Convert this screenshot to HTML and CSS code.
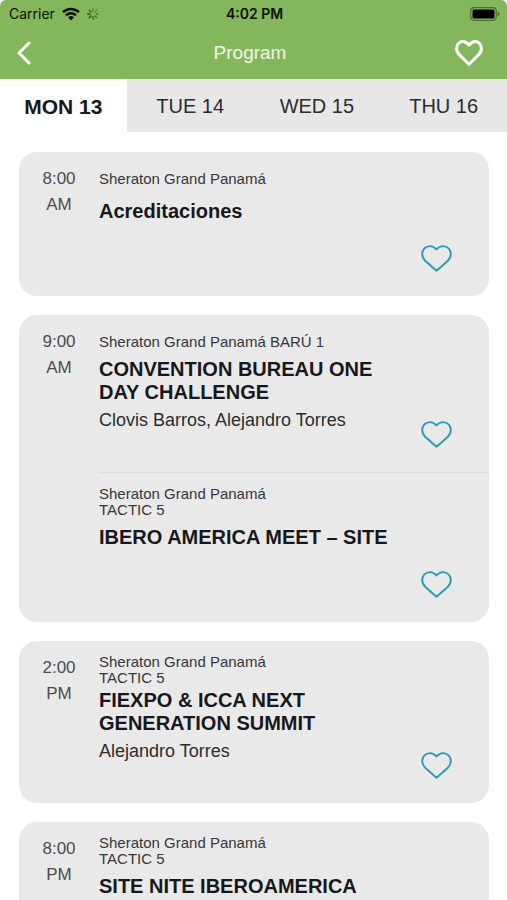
FILE: index.html
```
<!DOCTYPE html>
<html lang="en">
<head>
  <meta charset="UTF-8" />
  <meta name="viewport" content="width=device-width, initial-scale=1.0"/>
  <title>Program</title>
  <link rel="stylesheet" href="styles.css">
</head>
<body>

<!-- Shared heart icon -->
<svg class="sprite" aria-hidden="true">
  <symbol id="heart" viewBox="0 0 32 28">
    <path d="M16 4.600C13.800 2.200 11.400 1.200 9.200 1.200 4.600 1.200 1.200 4.800 1.200 9.400c0 3 1.300 5.200 3.300 7.200L16 26.800l11.500-10.200c2-2 3.300-4.200 3.300-7.200 0-4.600-3.400-8.200-8-8.200-2.200 0-4.600 1-6.800 3.400z"/>
  </symbol>
</svg>

<div class="app">

  <!-- Header -->
  <header class="header">
    <div class="status">
      <div class="status-left">
        <span>Carrier</span>
        <svg class="wifi" viewBox="0 0 18 14" aria-hidden="true">
          <path d="M1 5.200a11.500 11.500 0 0 1 16 0M4 8.300a7.200 7.200 0 0 1 10 0" fill="none" stroke="#0b1006" stroke-width="2.500"/>
          <path d="M6 10.300a4.400 4.400 0 0 1 6 0L9 13.500z" fill="#0b1006"/>
        </svg>
        <svg class="spinner" viewBox="0 0 12 12" aria-hidden="true">
          <g stroke="#2b4417" stroke-width="1.400" stroke-linecap="round">
            <path d="M6 .8v2.400" opacity=".5"/>
            <path d="M9.700 2.300L8 4" opacity=".4"/>
            <path d="M11.200 6H8.800" opacity=".5"/>
            <path d="M9.700 9.700L8 8" opacity=".6"/>
            <path d="M6 11.200V8.800" opacity=".75"/>
            <path d="M2.300 9.700L4 8" opacity=".9"/>
            <path d="M.8 6h2.400"/>
            <path d="M2.300 2.300L4 4" opacity=".8"/>
          </g>
        </svg>
      </div>
      <span class="clock">4:02 PM</span>
      <div class="status-right">
        <svg class="battery" viewBox="0 0 30 14" aria-hidden="true">
          <rect x=".7" y=".7" width="25.600" height="12.600" rx="3.500" fill="none" stroke="#4c7030" stroke-width="1.200"/>
          <rect x="2.500" y="2.500" width="22" height="9" rx="1.500" fill="#000"/>
          <path d="M27.600 4.800c1.400.6 2 1.300 2 2.200s-.6 1.600-2 2.200z" fill="#4c7030"/>
        </svg>
      </div>
    </div>
    <div class="navbar">
      <button class="nav-btn" aria-label="Back">
        <svg class="chevron" viewBox="0 0 14 24"><path d="M12 2L2 12l10 10"/></svg>
      </button>
      <h1 class="nav-title">Program</h1>
      <button class="nav-btn nav-btn-right" aria-label="Favorites">
        <svg class="nav-heart" viewBox="0 0 28 26"><path d="M14 5C11.800 2.500 9.700 1.600 7.900 1.600 4.400 1.600 1.600 4.500 1.600 8.400c0 2.700 1.100 4.700 2.900 6.500l9.500 9.300 9.500-9.300c1.800-1.800 2.900-3.800 2.900-6.500 0-3.900-2.800-6.800-6.300-6.800-1.800 0-3.900.9-6.100 3.400z"/></svg>
      </button>
    </div>
  </header>

  <!-- Days -->
  <nav class="days">
    <button class="day active">MON 13</button>
    <button class="day">TUE 14</button>
    <button class="day">WED 15</button>
    <button class="day">THU 16</button>
  </nav>

  <!-- Schedule -->
  <main class="schedule">

    <section class="card">
      <div class="time">8:00<br>AM</div>
      <div class="sessions">
        <article class="session">
          <div class="info">
            <p class="venue">Sheraton Grand Panamá</p>
            <h2 class="title">Acreditaciones</h2>
            <p class="speaker"></p>
          </div>
          <button class="fav" aria-label="Add to favorites"><svg><use href="#heart"/></svg></button>
        </article>
      </div>
    </section>

    <section class="card">
      <div class="time">9:00<br>AM</div>
      <div class="sessions">
        <article class="session">
          <div class="info">
            <p class="venue">Sheraton Grand Panamá BARÚ 1</p>
            <h2 class="title">CONVENTION BUREAU ONE DAY CHALLENGE</h2>
            <p class="speaker">Clovis Barros, Alejandro Torres</p>
          </div>
          <button class="fav" aria-label="Add to favorites"><svg><use href="#heart"/></svg></button>
        </article>
        <article class="session">
          <div class="info">
            <p class="venue">Sheraton Grand Panamá<br>TACTIC 5</p>
            <h2 class="title">IBERO AMERICA MEET – SITE</h2>
            <p class="speaker"></p>
          </div>
          <button class="fav" aria-label="Add to favorites"><svg><use href="#heart"/></svg></button>
        </article>
      </div>
    </section>

    <section class="card">
      <div class="time">2:00<br>PM</div>
      <div class="sessions">
        <article class="session">
          <div class="info">
            <p class="venue">Sheraton Grand Panamá<br>TACTIC 5</p>
            <h2 class="title">FIEXPO &amp; ICCA NEXT GENERATION SUMMIT</h2>
            <p class="speaker">Alejandro Torres</p>
          </div>
          <button class="fav" aria-label="Add to favorites"><svg><use href="#heart"/></svg></button>
        </article>
      </div>
    </section>

    <section class="card">
      <div class="time">8:00<br>PM</div>
      <div class="sessions">
        <article class="session">
          <div class="info">
            <p class="venue">Sheraton Grand Panamá<br>TACTIC 5</p>
            <h2 class="title">SITE NITE IBEROAMERICA</h2>
            <p class="speaker"></p>
          </div>
          <button class="fav" aria-label="Add to favorites"><svg><use href="#heart"/></svg></button>
        </article>
      </div>
    </section>

  </main>
</div>

</body>
</html>
```
FILE: styles.css
```
* {
  box-sizing: border-box;
}

body {
  margin: 0;
  font-family: "Liberation Sans", Arial, sans-serif;
  background: #fff;
  color: #17181b;
}

button {
  margin: 0;
  padding: 0;
  border: none;
  background: none;
  font-family: inherit;
  color: inherit;
  cursor: pointer;
}

h1, h2, p {
  margin: 0;
}

svg {
  display: block;
}

.sprite {
  display: none;
}

.app {
  display: flex;
  flex-direction: column;
  height: 100vh;
}

/* Header */
.header {
  flex: none;
  background: #84b75b;
  border-radius: 6px 6px 0 0;
}

.status {
  display: grid;
  grid-template-columns: 1fr auto 1fr;
  align-items: center;
  height: 27px;
  padding: 0 7px 0 9px;
  font-family: Inter, sans-serif;
  font-size: 14px;
  color: #0b1006;
}

.status-left {
  display: flex;
  align-items: center;
  gap: 7px;
}

.status-right {
  display: flex;
  justify-content: flex-end;
}

.clock {
  font-weight: 600;
}

.wifi {
  width: 18px;
  height: 14px;
}

.spinner {
  width: 12px;
  height: 12px;
}

.battery {
  width: 30px;
  height: 14px;
}

.navbar {
  display: grid;
  grid-template-columns: 1fr auto 1fr;
  align-items: center;
  height: 52px;
  padding: 0 24px 0 17px;
}

.nav-title {
  font-size: 19px;
  font-weight: 300;
  color: #f0f8e8;
}

.nav-btn {
  justify-self: start;
}

.nav-btn-right {
  justify-self: end;
}

.chevron, .nav-heart {
  fill: none;
  stroke: #fff;
  stroke-width: 3;
  stroke-linecap: round;
  stroke-linejoin: round;
}

.chevron {
  width: 14px;
  height: 24px;
}

.nav-heart {
  width: 28px;
  height: 26px;
}

/* Days */
.days {
  flex: none;
  display: grid;
  grid-template-columns: repeat(4, 1fr);
  height: 53px;
  background: #e7e7e7;
}

.day {
  padding-top: 2px;
  font-size: 20px;
  color: #2c2c2e;
}

.day.active {
  background: #fff;
  font-size: 21px;
  font-weight: bold;
  color: #17181b;
}

/* Schedule */
.schedule {
  flex: 1;
  min-height: 0;
  display: flex;
  flex-direction: column;
  gap: 19px;
  padding: 20px 18px 20px 19px;
  overflow-y: auto;
  scrollbar-width: none;
}

.card {
  flex: none;
  display: flex;
  background: #e9e9e9;
  border-radius: 18px;
}

.time {
  flex: none;
  width: 80px;
  padding-top: 14px;
  font-size: 17px;
  line-height: 26px;
  text-align: center;
  color: #4c4c4e;
}

.sessions {
  flex: 1;
  min-width: 0;
}

.session {
  display: flex;
  align-items: flex-end;
  gap: 16px;
  padding: 11px 37px 0 0;
}

.session + .session {
  border-top: 1px solid #dcdcdc;
}

.info {
  flex: 1;
  padding-bottom: 40px;
}

.venue {
  display: flex;
  align-items: center;
  min-height: 32px;
  padding: 2px 0 3px;
  font-size: 15px;
  line-height: 16px;
  color: #37373a;
}

.title {
  display: flex;
  align-items: center;
  min-height: 33px;
  font-size: 20px;
  font-weight: bold;
  line-height: 23px;
}

.speaker {
  min-height: 28px;
  padding-top: 5px;
  font-size: 18px;
  line-height: 23px;
  color: #2c2c2e;
}

.fav {
  flex: none;
  margin-bottom: 24px;
}

.fav svg {
  width: 31px;
  height: 27px;
  fill: none;
  stroke: #2b9bb5;
  stroke-width: 2;
  stroke-linejoin: round;
}
```
